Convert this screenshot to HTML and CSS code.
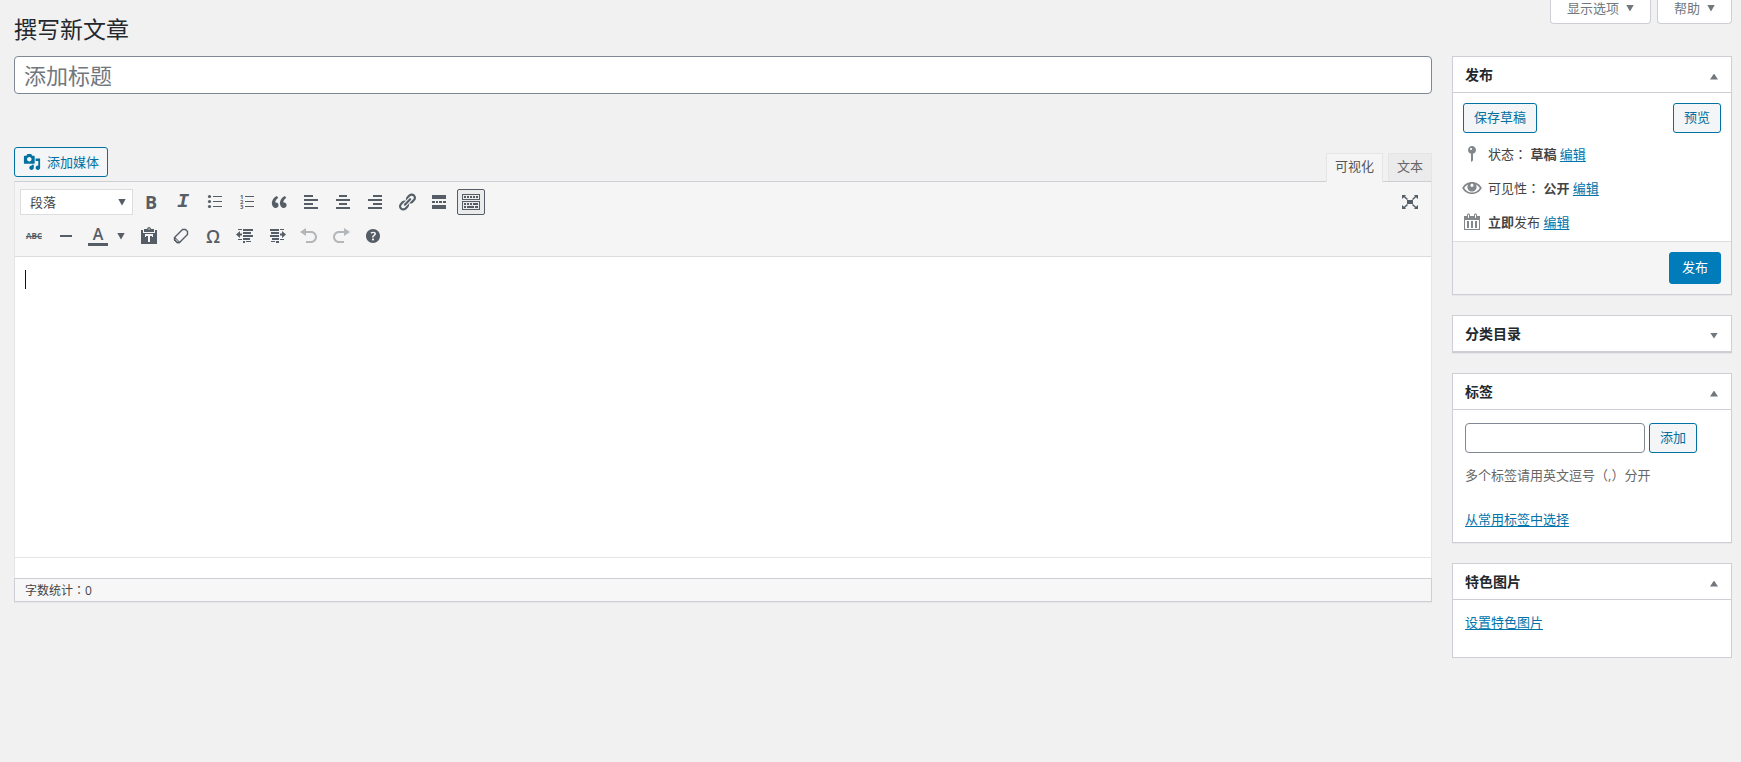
FILE: index.html
```html
<!DOCTYPE html>
<html lang="zh-CN">
<head>
<meta charset="utf-8">
<title>撰写新文章</title>
<link rel="stylesheet" href="styles.css">
</head>
<body>
<header class="top">
  <h1>撰写新文章</h1>
  <div class="screen-meta">
    <button class="meta-btn" type="button">显示选项<span class="tri down"></span></button>
    <button class="meta-btn" type="button">帮助<span class="tri down"></span></button>
  </div>
</header>
<div class="layout">
  <main class="main">
    <input class="title" type="text" placeholder="添加标题" aria-label="添加标题">
    <div class="editor-tools">
      <button class="btn media" type="button">
        <svg class="media-icon" viewBox="0 0 20 20"><path d="M13 11V4c0-.55-.45-1-1-1h-1.67L9 1H5L3.67 3H2c-.55 0-1 .45-1 1v7c0 .55.45 1 1 1h10c.55 0 1-.45 1-1zM7 4.5c1.38 0 2.5 1.12 2.5 2.5S8.38 9.5 7 9.5 4.5 8.38 4.5 7 5.62 4.5 7 4.5zM14 6h5v10.5c0 1.38-1.12 2.5-2.5 2.5S14 17.88 14 16.5s1.12-2.5 2.5-2.5c.17 0 .34.02.5.05V9h-3V6zm-4 8.05V13h2v3.5c0 1.38-1.12 2.5-2.5 2.5S7 17.88 7 16.5 8.12 14 9.5 14c.17 0 .34.02.5.05z"/></svg>添加媒体</button>
      <div class="tabs">
        <button class="tab active" type="button">可视化</button>
        <button class="tab" type="button">文本</button>
      </div>
    </div>
    <section class="editor">
      <div class="toolbar">
        <div class="row">
          <div class="format"><select aria-label="格式"><option>段落</option></select><span class="tri down"></span></div>
          <button class="tool" type="button" aria-label="粗体"><span class="g-bold">B</span></button>
          <button class="tool" type="button" aria-label="斜体"><span class="g-italic">I</span></button>
          <button class="tool" type="button" aria-label="项目符号列表"><svg viewBox="0 0 20 20"><circle cx="4.500" cy="4.500" r="1.600"/><circle cx="4.500" cy="9.500" r="1.600"/><circle cx="4.500" cy="14.500" r="1.600"/><path d="M8 4h9v1H8zM8 9h9v1H8zM8 14h9v1H8z"/></svg></button>
          <button class="tool" type="button" aria-label="编号列表"><svg viewBox="0 0 20 20"><path d="M8 4h9v1H8zM8 9h9v1H8zM8 14h9v1H8z"/><text x="3" y="7" class="num">1</text><text x="3" y="12" class="num">2</text><text x="3" y="17" class="num">3</text></svg></button>
          <button class="tool" type="button" aria-label="引用"><svg viewBox="0 0 20 20"><path d="M9.490 13.220c0-.74-.2-1.380-.61-1.900-.62-.78-1.830-.88-2.530-.72-.29-1.650 1.110-3.750 2.920-4.650L7.880 4c-2.730 1.300-5.420 4.280-4.960 8.050C3.210 14.430 4.590 16 6.540 16c.85 0 1.560-.25 2.120-.75s.83-1.180.83-2.030zm8.050 0c0-.74-.2-1.380-.61-1.900-.63-.78-1.830-.88-2.530-.72-.29-1.650 1.110-3.750 2.920-4.650L15.930 4c-2.730 1.300-5.410 4.280-4.950 8.050.29 2.380 1.660 3.950 3.610 3.950.85 0 1.560-.25 2.120-.75s.83-1.180.83-2.030z"/></svg></button>
          <button class="tool" type="button" aria-label="左对齐"><svg viewBox="0 0 20 20"><path d="M3 3h9v2H3zM3 7h14v2H3zM3 11h9v2H3zM3 15h14v2H3z"/></svg></button>
          <button class="tool" type="button" aria-label="居中对齐"><svg viewBox="0 0 20 20"><path d="M6 3h8v2H6zM3 7h14v2H3zM6 11h8v2H6zM3 15h14v2H3z"/></svg></button>
          <button class="tool" type="button" aria-label="右对齐"><svg viewBox="0 0 20 20"><path d="M8 3h9v2H8zM3 7h14v2H3zM8 11h9v2H8zM3 15h14v2H3z"/></svg></button>
          <button class="tool" type="button" aria-label="链接"><svg viewBox="0 0 20 20"><path d="M17.740 2.760c1.680 1.690 1.680 4.410 0 6.100l-1.530 1.520c-1.120 1.120-2.700 1.470-4.140 1.090l2.620-2.610.76-.77.76-.76c.84-.84.84-2.200 0-3.040-.84-.85-2.200-.85-3.040 0l-.77.76-3.380 3.380c-.37-1.440-.02-3.020 1.100-4.140l1.520-1.530c1.690-1.680 4.420-1.680 6.100 0zM8.590 13.430l5.340-5.340c.42-.42.42-1.100 0-1.520-.44-.43-1.130-.39-1.530 0l-5.330 5.340c-.42.42-.42 1.100 0 1.520.44.43 1.130.39 1.520 0zm-.76 2.290l4.140-4.150c.38 1.440.03 3.020-1.090 4.140l-1.520 1.530c-1.690 1.680-4.410 1.680-6.100 0-1.680-1.680-1.680-4.420 0-6.100l1.530-1.520c1.120-1.120 2.700-1.470 4.140-1.100l-4.140 4.150c-.85.84-.85 2.200 0 3.050.84.84 2.200.84 3.040 0z"/></svg></button>
          <button class="tool" type="button" aria-label="插入更多标签"><svg viewBox="0 0 20 20"><path d="M3 3h14v4H3zM3 9h3v2H3zM7 9h2v2H7zM10 9h3v2h-3zM14 9h3v2h-3zM3 13h14v4H3z"/></svg></button>
          <button class="tool pressed" type="button" aria-label="工具栏开关"><svg viewBox="0 0 20 20"><path fill-rule="evenodd" d="M1 2h18v6H1zM2 3v4h16V3zM1 9h18v9H1zM2 10v7h16v-7zM3 4h2v2H3zM6 4h2v2H6zM9 4h2v2H9zM12 4h2v2h-2zM15 4h2v2h-2zM3 11h2v2H3zM6 11h2v2H6zM9 11h2v2H9zM12 11h5v2h-5zM3 14h2v2H3zM6 14h7v2H6zM14 14h3v2h-3z"/></svg></button>
          <button class="tool full" type="button" aria-label="全屏"><svg viewBox="0 0 20 20"><path d="M7 8h6v4H7zM2 3h4L5 4.200 8 7 7 8 4 5.200 2 7zM18 3h-4l1 1.200L12 7l1 1 3-2.800L18 7zM2 17h4l-1-1.200L8 13l-1-1-3 2.800L2 13zM18 17h-4l1-1.200-3-2.800 1-1 3 2.800L18 13z"/></svg></button>
        </div>
        <div class="row">
          <button class="tool" type="button" aria-label="删除线"><span class="g-strike">ABC</span></button>
          <button class="tool" type="button" aria-label="水平线"><svg viewBox="0 0 20 20"><path d="M4 9h12v2H4z"/></svg></button>
          <button class="tool color" type="button" aria-label="文字颜色"><span class="g-color">A</span></button>
          <button class="tool caret-btn" type="button" aria-label="选择颜色"><span class="tri down"></span></button>
          <button class="tool" type="button" aria-label="粘贴为文本"><svg viewBox="0 0 20 20"><path fill-rule="evenodd" d="M2 4h2v3h12V4h2v14H2zM5 6V3h3c0-1 1-2 2-2s2 1 2 2h3v3zM9.300 2.500v1h1.400v-1zM6 8v3h1V10h2v6h2v-6h2v1h1V8z"/></svg></button>
          <button class="tool" type="button" aria-label="清除格式"><svg viewBox="0 0 20 20"><path class="line" d="M11.500 3.500 3.500 11.500V13.800L6.200 16.500H8.500L16.500 8.500V5.500L14.500 3.500Z"/><path d="M3 11.500 4 11 9.500 16.500 8.500 17.200H6L3 14.200z"/><path class="paper" d="M4.600 12.800 7.600 15.800H6.600L4.600 13.800z"/></svg></button>
          <button class="tool" type="button" aria-label="特殊字符"><span class="g-omega">Ω</span></button>
          <button class="tool" type="button" aria-label="减少缩进量"><svg viewBox="0 0 20 20"><path d="M3 3h4v1H3zM8 3h10v2H8zM8 6h8v2H8zM8 9h10v2H8zM8 12h7v2H8zM3 13h4v1H3zM8 15h2v2H8zM1 8.500 5 5v2.500h2v2H5V12zM11 15h5v1h-5z"/></svg></button>
          <button class="tool" type="button" aria-label="增加缩进量"><svg viewBox="0 0 20 20"><path d="M13 3h4v1h-4zM3 3h9v2H3zM4 6h8v2H4zM3 9h9v2H3zM5 12h7v2H5zM13 13h4v1h-4zM9 15h3v2H9zM19 8.500 15 5v2.500h-2v2h2V12zM4 15h4v1H4z"/></svg></button>
          <button class="tool off" type="button" aria-label="撤销" disabled><svg viewBox="0 0 20 20"><path d="M12 5H7V2L1 6l6 4V7h5c2.200 0 4 1.800 4 4s-1.800 4-4 4H7v2h5c3.300 0 6-2.700 6-6s-2.700-6-6-6z"/></svg></button>
          <button class="tool off" type="button" aria-label="重做" disabled><svg viewBox="0 0 20 20"><path d="M8 5h5V2l6 4-6 4V7H8c-2.200 0-4 1.800-4 4s1.800 4 4 4h5v2H8c-3.300 0-6-2.700-6-6s2.700-6 6-6z"/></svg></button>
          <button class="tool" type="button" aria-label="键盘快捷键"><svg viewBox="0 0 20 20"><path d="M17 10c0-3.870-3.140-7-7-7-3.870 0-7 3.130-7 7s3.130 7 7 7c3.860 0 7-3.130 7-7zm-6.300 1.480H9.140v-.43c0-.38.08-.7.24-.98s.46-.57.88-.89c.41-.29.68-.53.81-.71.14-.18.2-.39.2-.62 0-.25-.09-.44-.28-.58-.19-.13-.45-.19-.79-.19-.58 0-1.250.19-2 .57l-.64-1.280c.87-.49 1.800-.74 2.770-.74.81 0 1.450.2 1.920.58.48.39.71.91.71 1.550 0 .43-.09.8-.29 1.110-.19.32-.57.67-1.110 1.060-.38.28-.61.49-.71.63-.1.15-.15.34-.15.57v.35zm-1.470 2.740c-.18-.17-.27-.42-.27-.73 0-.33.08-.58.26-.75s.43-.25.77-.25c.32 0 .57.09.75.26s.27.42.27.74c0 .3-.09.55-.27.72-.18.18-.43.27-.75.27-.33 0-.58-.09-.76-.26z"/></svg></button>
        </div>
      </div>
      <div class="writing">
        <textarea aria-label="正文"></textarea>
        <span class="cursor"></span>
      </div>
      <div class="path"></div>
    </section>
    <div class="status">字数统计<span class="mid" lang="zh-TW">：</span>0</div>
  </main>
  <aside class="side">
    <section class="box">
      <div class="box-head"><h2>发布</h2><span class="tri up"></span></div>
      <div class="publish">
        <div class="actions"><button class="btn" type="button">保存草稿</button><button class="btn" type="button">预览</button></div>
        <div class="info"><svg viewBox="0 0 20 20"><path d="M14 6c0 1.860-1.280 3.410-3 3.860V16c0 1-2 2-2 2V9.860c-1.720-.45-3-2-3-3.860 0-2.210 1.790-4 4-4s4 1.790 4 4zM8 5c0 .55.45 1 1 1s1-.45 1-1-.45-1-1-1-1 .45-1 1z"/></svg><p>状态<span class="mid" lang="zh-TW">：</span> <b>草稿</b> <a href="#">编辑</a></p></div>
        <div class="info"><svg viewBox="0 0 20 20"><path fill-rule="evenodd" d="M10 4c4.500 0 8.200 2.600 9.800 6-1.600 3.400-5.300 6-9.800 6S1.800 13.400.2 10C1.800 6.600 5.500 4 10 4zM10 14.500c3.500 0 6.300-1.800 7.800-4.500-.9-1.500-2.300-2.800-4-3.600.5.700.8 1.600.8 2.500 0 2.500-2 4.600-4.600 4.600S5.400 11.400 5.400 8.900c0-.9.300-1.800.8-2.500-1.700.8-3.100 2.100-4 3.600 1.500 2.700 4.300 4.500 7.800 4.500zM10 5.700c-.9 0-1.600.7-1.600 1.600s.7 1.600 1.600 1.600 1.600-.7 1.600-1.600-.7-1.600-1.600-1.600z"/></svg><p>可见性<span class="mid" lang="zh-TW">：</span> <b>公开</b> <a href="#">编辑</a></p></div>
        <div class="info"><svg viewBox="0 0 20 20"><path d="M15 4h3v14H2V4h3V3c0-.83.67-1.500 1.500-1.500S8 2.170 8 3v1h4V3c0-.83.67-1.500 1.500-1.500S15 2.170 15 3v1zM6 3v2.500c0 .28.22.5.5.5s.5-.22.5-.5V3c0-.28-.22-.5-.5-.5S6 2.720 6 3zm7 0v2.500c0 .28.22.5.5.5s.5-.22.5-.5V3c0-.28-.22-.5-.5-.5s-.5.220-.5.5zm4 14V8H3v9h14zM7 16V9H5v7h2zm4 0V9H9v7h2zm4 0V9h-2v7h2z"/></svg><p><b>立即</b>发布 <a href="#">编辑</a></p></div>
      </div>
      <div class="box-foot"><button class="btn primary" type="button">发布</button></div>
    </section>
    <section class="box">
      <div class="box-head"><h2>分类目录</h2><span class="tri down"></span></div>
    </section>
    <section class="box">
      <div class="box-head"><h2>标签</h2><span class="tri up"></span></div>
      <div class="tags">
        <div class="tag-row"><input type="text" aria-label="标签"><button class="btn" type="button">添加</button></div>
        <p class="hint">多个标签请用英文逗号<span class="mid" lang="zh-TW">（,）</span>分开</p>
        <a href="#">从常用标签中选择</a>
      </div>
    </section>
    <section class="box">
      <div class="box-head"><h2>特色图片</h2><span class="tri up"></span></div>
      <div class="thumb"><a href="#">设置特色图片</a></div>
    </section>
  </aside>
</div>
</body>
</html>
```
FILE: styles.css
```css
* { box-sizing: border-box; }
body {
  margin: 0;
  padding: 0 9px 0 14px;
  background: #f1f1f1;
  color: #444;
  font: 13px/20px "Open Sans", "Noto Sans CJK SC", sans-serif;
}
button, input, select, textarea { font: inherit; }
h1, h2, p { margin: 0; }
a { color: #0073aa; text-underline-offset: 2px; }

/* full-width punctuation centred in its cell */
.mid { font-family: "Open Sans", "Noto Sans CJK TC", sans-serif; }

.tri { width: 8px; height: 7px; background: #72777c; flex: none; }
.tri.down { clip-path: polygon(0 0, 100% 0, 50% 100%); }
.tri.up { clip-path: polygon(50% 0, 100% 100%, 0 100%); }

.top { display: flex; justify-content: space-between; align-items: flex-start; height: 56px; }
h1 { padding-top: 14px; color: #23282d; font-size: 23px; font-weight: 400; line-height: 30px; }
.screen-meta { display: flex; gap: 6px; }
.meta-btn {
  display: flex; align-items: center; gap: 7px;
  height: 24px; padding: 0 16px 7px;
  border: 1px solid #ccd0d4; border-top: 0; border-radius: 0 0 4px 4px;
  background: #fff; color: #72777c;
}

.layout { display: flex; align-items: flex-start; gap: 20px; }
.main { flex: 1; min-width: 0; }
.side { display: flex; flex-direction: column; gap: 20px; width: 280px; }

.title {
  display: block; width: 100%; height: 38px; padding: 0 9px;
  border: 1px solid #7e8993; border-radius: 4px;
  background: #fff; font-size: 22px; line-height: 36px;
}
.title::placeholder { color: #72777c; opacity: 1; }

.btn {
  height: 30px; padding: 0 10px 2px;
  border: 1px solid #0071a1; border-radius: 3px;
  background: #f3f5f6; color: #0071a1; line-height: 26px; white-space: nowrap;
}
.btn.primary { height: 32px; padding: 0 12px 2px; border-color: #007cba; background: #007cba; color: #fff; }

.editor-tools { display: flex; justify-content: space-between; align-items: flex-end; height: 87px; }
.media { display: flex; align-items: center; gap: 6px; padding: 0 8px 1px; margin-bottom: 4px; }
.media-icon { width: 18px; height: 18px; fill: #0071a1; }
.tabs { display: flex; gap: 5px; }
.tab {
  height: 28px; padding: 0 8px 3px;
  border: 1px solid #e5e5e5; border-bottom: 0;
  background: #ebebeb; color: #666;
}
.tab.active { position: relative; height: 29px; padding-bottom: 4px; margin-bottom: -1px; background: #f5f5f5; color: #555; }

.editor { border: 1px solid #e5e5e5; border-top-color: #ccd0d4; border-bottom: 0; background: #fff; }
.toolbar { padding: 3px; border-bottom: 1px solid #dcdcdc; background: #f5f5f5; }
.row { display: flex; align-items: center; height: 34px; padding: 0 2px; gap: 4px; }
.format { display: flex; align-items: center; position: relative; width: 113px; height: 26px; }
.format select {
  width: 100%; height: 100%; padding: 0 9px; appearance: none;
  border: 1px solid #ddd; border-radius: 0; background: #fff; color: #444; line-height: 20px;
}
.format .tri { position: absolute; right: 7px; pointer-events: none; }
.tool {
  display: flex; align-items: center; justify-content: center;
  width: 28px; height: 26px; padding: 0;
  border: 1px solid transparent; border-radius: 2px;
  background: none; color: #555d66; flex: none;
}
.tool svg { width: 20px; height: 20px; fill: #555d66; flex: none; }
.tool .tri, .format .tri { background: #555d66; }
.tool.pressed { border-color: #555d66; background: #ebebeb; }
.tool.full { margin-left: auto; margin-right: 2px; }
.tool.off svg { fill: #b4b7ba; }
.tool.color { width: 24px; margin-left: 2px; }
.tool.caret-btn { width: 14px; margin-right: 3px; }
.num { font: 700 6px "Open Sans", sans-serif; }
.tool svg .line { fill: none; stroke: #555d66; stroke-width: 1.4; }
.tool svg .paper { fill: #f5f5f5; }
.g-bold { font: 700 18px/20px "Open Sans", sans-serif; }
.g-italic { font: italic 700 20px/20px "Liberation Mono", monospace; }
.g-strike { font: 700 8px/10px "Open Sans", sans-serif; text-decoration: line-through; }
.g-color { width: 20px; border-bottom: 3px solid #555d66; font: 600 16px/17px "Open Sans", sans-serif; }
.g-omega { font: 600 18px/20px "Open Sans", sans-serif; }

.writing { position: relative; height: 301px; border-bottom: 1px solid #e5e5e5; }
.writing textarea { display: block; width: 100%; height: 100%; padding: 10px; border: 0; outline: 0; resize: none; background: none; }
.cursor { position: absolute; left: 10px; top: 13px; width: 1px; height: 19px; background: #111; }
.path { height: 20px; }
.status {
  height: 24px; padding: 0 10px;
  border: 1px solid #ccd0d4; background: #f7f7f7;
  box-shadow: 0 1px 1px rgba(0, 0, 0, .04);
  font-size: 12px; line-height: 24px;
}

.box { border: 1px solid #ccd0d4; background: #fff; box-shadow: 0 1px 1px rgba(0, 0, 0, .04); }
.box-head {
  display: flex; align-items: center; justify-content: space-between;
  height: 36px; padding: 0 13px 0 12px; border-bottom: 1px solid #ccd0d4;
}
h2 { color: #23282d; font-size: 14px; font-weight: 600; line-height: 20px; }
.box-head .tri { margin-top: 4px; height: 6px; }
.publish { padding: 10px 10px 2px 9px; }
.actions { display: flex; justify-content: space-between; margin-bottom: 4px; margin-left: 1px; }
.info { display: flex; align-items: center; gap: 6px; height: 34px; }
.info svg { width: 20px; height: 20px; fill: #82878c; }
.info b { font-weight: 600; }
.box-foot { display: flex; justify-content: flex-end; padding: 10px; border-top: 1px solid #ddd; background: #f5f5f5; }
.tags { padding: 13px 12px; }
.tag-row { display: flex; gap: 4px; }
.tag-row input { width: 180px; height: 30px; padding: 0 8px; border: 1px solid #7e8993; border-radius: 4px; background: #fff; }
.hint { margin: 12px 0 24px; color: #666; }
.thumb { padding: 12px 12px 25px; }
```
